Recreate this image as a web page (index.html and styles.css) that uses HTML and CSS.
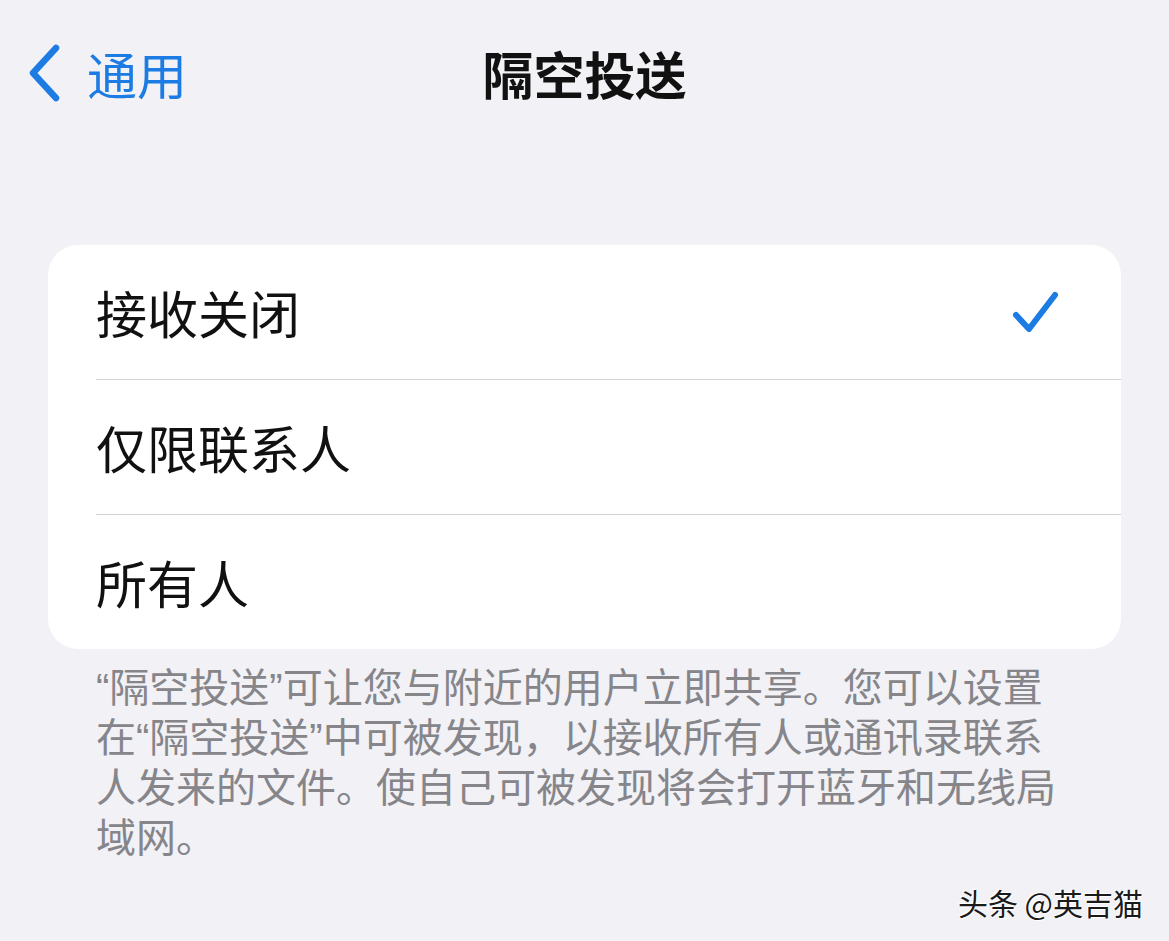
FILE: index.html
```html
<!DOCTYPE html>
<html lang="zh-CN">
<head>
<meta charset="utf-8">
<link rel="stylesheet" href="styles.css">
</head>
<body>
<div class="page">
  <header class="nav">
    <div class="back">
      <svg class="chev" width="36" height="60" viewBox="0 0 36 60"><path d="M30 5 L7 30 L30 55" fill="none" stroke="#1c7ce3" stroke-width="6.5" stroke-linecap="round" stroke-linejoin="round"/></svg>
      <span class="back-label">通用</span>
    </div>
    <h1 class="title">隔空投送</h1>
    <div class="spacer"></div>
  </header>
  <section class="card">
    <div class="row">
      <span class="row-label">接收关闭</span>
      <svg class="check" width="48" height="46" viewBox="0 0 48 46"><path d="M4 26 L17 40 L43 6" fill="none" stroke="#1c7ce3" stroke-width="6" stroke-linecap="round" stroke-linejoin="round"/></svg>
    </div>
    <div class="row">
      <span class="row-label">仅限联系人</span>
    </div>
    <div class="row">
      <span class="row-label">所有人</span>
    </div>
  </section>
  <p class="footer">“隔空投送”可让您与附近的用户立即共享。您可以设置在“隔空投送”中可被发现，以接收所有人或通讯录联系人发来的文件。使自己可被发现将会打开蓝牙和无线局域网。</p>
  <div class="watermark">头条 @英吉猫</div>
</div>
</body>
</html>
```
FILE: styles.css
```css
html, body {
  margin: 0;
  padding: 0;
  background: #f1f1f6;
}
body {
  font-family: "Noto Sans CJK SC", "Noto Sans", sans-serif;
  width: 1169px;
  height: 941px;
  overflow: hidden;
}
.page {
  position: relative;
  height: 941px;
}
.nav {
  display: grid;
  grid-template-columns: 1fr auto 1fr;
  align-items: center;
  height: 146px;
}
.back {
  display: flex;
  align-items: center;
  gap: 25px;
  padding-left: 26px;
  color: #1c7ce3;
}
.chev {
  display: block;
}
.back-label {
  font-size: 50px;
  line-height: 1;
}
.title {
  margin: 0;
  font-size: 51px;
  font-weight: 700;
  color: #111;
  line-height: 1;
}
.card {
  margin: 99px 48px 0 48px;
  background: #fff;
  border-radius: 30px;
  overflow: hidden;
}
.row {
  display: flex;
  align-items: center;
  justify-content: space-between;
  height: 134px;
  margin-left: 48px;
  padding-right: 61px;
  border-bottom: 1px solid #d2d2d6;
}
.row:last-child {
  border-bottom: none;
}
.row-label {
  font-size: 51px;
  color: #111;
  line-height: 1;
}
.check {
  display: block;
}
.footer {
  width: 975px;
  margin: 14px 0 0 96px;
  font-family: "Liberation Sans", "Noto Sans CJK SC", sans-serif;
  font-size: 40px;
  line-height: 50px;
  color: #85858a;
}
.watermark {
  position: absolute;
  right: 26px;
  top: 880px;
  font-size: 30px;
  color: #1a1a1a;
  text-shadow: 1px 1px 0 #fff, -1px -1px 0 #fff;
}
```
